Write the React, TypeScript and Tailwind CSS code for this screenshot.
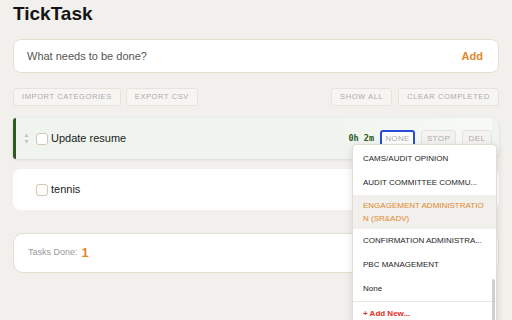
import { useState } from 'react';

type Task = { id: number; title: string; time: string; active: boolean };

const tasks: Task[] = [
  { id: 1, title: 'Update resume', time: '0h 2m', active: true },
  { id: 2, title: 'tennis', time: '0h 0m', active: false },
];

const categories = [
  'CAMS/AUDIT OPINION',
  'AUDIT COMMITTEE COMMU...',
  'ENGAGEMENT ADMINISTRATION (SR&ADV)',
  'CONFIRMATION ADMINISTRA...',
  'PBC MANAGEMENT',
];

const ghostBtn =
  'h-[18px] px-[8px] flex items-center rounded-[3px] border border-[#e6e3dd] bg-[#f6f5f2] text-[7.5px] tracking-[0.6px] text-[#ababab]';

const rowBtn =
  'h-[18px] flex items-center justify-center rounded-[3px] text-[8px] tracking-[0.4px] text-[#ababab]';

function Grip() {
  return (
    <svg width="5" height="11" viewBox="0 0 5 11" className="shrink-0">
      <path d="M2.5 0.5 L4.5 4 L0.5 4 Z" fill="#c2c2c2" />
      <path d="M2.5 10.5 L4.5 7 L0.5 7 Z" fill="#c2c2c2" />
    </svg>
  );
}

function Checkbox() {
  return <span className="w-[12px] h-[12px] shrink-0 rounded-[3px] border-[1.5px] border-[#d3c9b3] bg-white" />;
}

function TaskRow({ task }: { task: Task }) {
  return (
    <div
      className={`h-[41px] flex items-center rounded-[8px] pr-[7px] ${
        task.active
          ? 'bg-[#eff5ee] border-l-[3px] border-[#2f5a24] rounded-l-[3px] pl-[8px] shadow-[0_1px_3px_rgba(0,0,0,0.10)]'
          : 'bg-white pl-[11px]'
      }`}
    >
      <div className="w-[12px] flex justify-start">{task.active && <Grip />}</div>
      <Checkbox />
      <span className="ml-[3px] text-[11px] text-[#222]">{task.title}</span>
      {task.active && (
        <div className="ml-auto flex items-center gap-[6px] h-full pl-[20px] bg-gradient-to-r from-transparent to-[#f7faf6]">
          <span className="font-['DejaVu_Sans_Mono',monospace] text-[8.5px] font-bold text-[#2c5a1f]">{task.time}</span>
          <span className={`${rowBtn} w-[35px] border-2 border-[#2a4bd6] bg-white`}>NONE</span>
          <span className={`${rowBtn} w-[35px] border border-[#e6e3dd] bg-[#f4f3f0]`}>STOP</span>
          <span className={`${rowBtn} w-[30px] border border-[#e6e3dd] bg-[#f4f3f0]`}>DEL</span>
        </div>
      )}
    </div>
  );
}

export default function App() {
  const [hovered] = useState(2);

  return (
    <div className="relative w-[512px] h-[320px] overflow-hidden bg-[#f2f0ec] px-[13px] pt-[4px] font-['Liberation_Sans',Arial,sans-serif]">
      <h1 className="text-[19px] leading-[19px] font-bold text-[#141414]">TickTask</h1>

      <div className="mt-[16px] h-[34px] flex items-center justify-between rounded-[8px] border border-[#e6dfcf] bg-white pl-[13px] pr-[15px]">
        <span className="text-[11px] text-[#555]">What needs to be done?</span>
        <span className="text-[11px] font-bold text-[#e0882b]">Add</span>
      </div>

      <div className="mt-[15px] flex items-center">
        <div className="flex gap-[5px]">
          <span className={ghostBtn}>IMPORT CATEGORIES</span>
          <span className={ghostBtn}>EXPORT CSV</span>
        </div>
        <div className="ml-auto flex gap-[6px]">
          <span className={ghostBtn}>SHOW ALL</span>
          <span className={ghostBtn}>CLEAR COMPLETED</span>
        </div>
      </div>

      <div className="mt-[12px] flex flex-col gap-[10px]">
        {tasks.map((t) => (
          <TaskRow key={t.id} task={t} />
        ))}
      </div>

      <div className="mt-[23px] h-[40px] flex items-center rounded-[10px] border border-[#e3ddcd] bg-white pl-[14px]">
        <span className="text-[9px] text-[#9a9a9a]">Tasks Done:</span>
        <span className="ml-[4px] text-[13px] font-bold text-[#e0882b]">1</span>
      </div>

      {/* category dropdown */}
      <div className="absolute left-[352px] top-[144px] w-[145px] h-[190px] overflow-hidden rounded-t-[4px] border border-[#e2ddd2] bg-white pt-[2px] shadow-[0_2px_8px_rgba(0,0,0,0.12)]">
        {categories.map((c, i) =>
          i === hovered ? (
            <div key={c} className="min-h-[24px] py-[4px] px-[10px] bg-[#f2f0ec] text-[8px] leading-[13px] text-[#e0882b] whitespace-nowrap">
              <div>ENGAGEMENT ADMINISTRATIO</div>
              <div>N (SR&amp;ADV)</div>
            </div>
          ) : (
            <div key={c} className="h-[24px] flex items-center px-[10px] text-[8px] text-[#1e1e1e] whitespace-nowrap">
              {c}
            </div>
          )
        )}
        <div className="h-[24px] flex items-center px-[10px] text-[8px] text-[#1e1e1e]">None</div>
        <div className="border-t border-[#ebe8e2]" />
        <div className="h-[24px] flex items-center px-[10px] text-[8px] font-bold text-[#e0301e]">+ Add New...</div>
        <div className="absolute right-[1px] top-[134px] w-[3px] h-[60px] rounded-full bg-[#cfcfcf]" />
      </div>
    </div>
  );
}
